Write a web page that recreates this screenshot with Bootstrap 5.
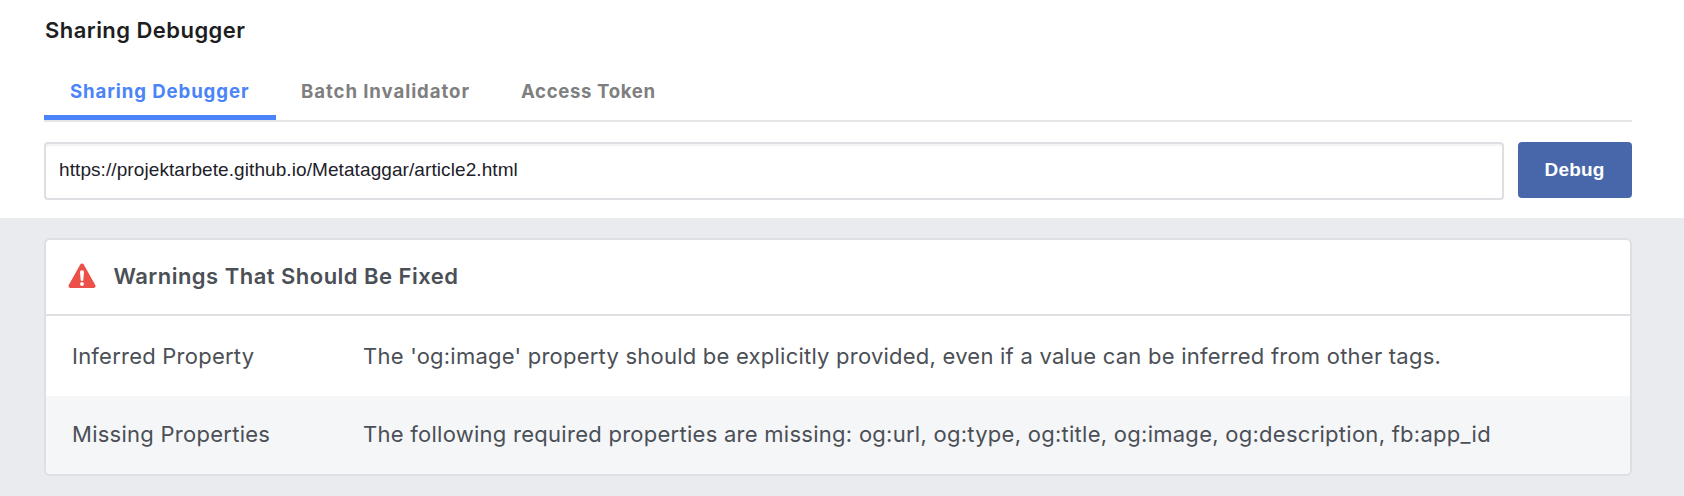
<!DOCTYPE html>
<html lang="en">
<head>
<meta charset="utf-8">
<meta name="viewport" content="width=device-width, initial-scale=1">
<title>Sharing Debugger</title>
<link href="https://cdn.jsdelivr.net/npm/bootstrap@5.3.0/dist/css/bootstrap.min.css" rel="stylesheet">
<style>
body{background:#e9ebee;font-family:Inter,sans-serif;min-height:496px;overflow:hidden}
.top{height:218px;padding:0 52px 0 44px}
h1{font-size:22px;font-weight:600;line-height:30px;padding:15px 0 0 1px;margin:0;color:#1c1e21;letter-spacing:.45px}
.tabs{height:62px;margin-top:15px;border-bottom:2px solid #e5e5e5;padding-top:1px}
.tabs .nav-link{height:59px;border-radius:0;padding:13px 0 0 26px;font-size:18.6px;line-height:34px;font-weight:700;color:#7f7f7f;white-space:nowrap}
.tabs .nav-link.active{color:#4a84f8;border-bottom:5px solid #4a84f8}
.tab-sharing{width:232px;letter-spacing:.9px}
.tabs .tab-batch{width:219px;padding-left:25px;letter-spacing:.93px}
.tab-token{width:190px;letter-spacing:.64px}
.query{margin-top:20px;gap:14px}
.query .form-control{height:58px;border:2px solid #dddfe2;border-radius:4px;padding:0 13px 2px;font:19px "Liberation Sans",sans-serif;letter-spacing:.085px;color:#1d2129;box-shadow:inset 0 2px #f4f4f5}
.query .btn{width:114px;height:56px;background:#4867aa;border:0;border-radius:4px;color:#fff;font:bold 19px "Liberation Sans",sans-serif;letter-spacing:.15px;padding:0 1px 0 0}
.panel{margin:20px 52px 0 44px;border:2px solid #dddfe2;border-radius:6px;background:#fff;overflow:hidden;color:#4b4f56;font-size:22px;letter-spacing:.23px}
.panel-head{height:76px;border-bottom:2px solid #dfe0e3;padding:0 0 2px 22px;font-weight:600;letter-spacing:.48px;gap:17.5px}
.panel-head svg{margin-top:-1px}
.entry{height:80px;padding-left:26px}
.entry-alt{height:78px;background:#f5f6f8;padding-bottom:1px;letter-spacing:.265px}
.entry dt{width:291px;font-weight:400}
.entry dd{margin:0;white-space:nowrap}
</style>
</head>
<body>
<header class="top bg-white">
<h1>Sharing Debugger</h1>
<nav class="nav tabs">
<a class="nav-link tab-sharing active" href="#">Sharing Debugger</a>
<a class="nav-link tab-batch" href="#">Batch Invalidator</a>
<a class="nav-link tab-token" href="#">Access Token</a>
</nav>
<form class="query d-flex">
<input class="form-control" aria-label="URL" value="https://projektarbete.github.io/Metataggar/article2.html">
<button class="btn flex-shrink-0" type="button">Debug</button>
</form>
</header>
<main class="panel">
<div class="panel-head d-flex align-items-center">
<svg width="28" height="26" viewBox="0 0 28 26"><path d="M14 2.5 25.5 23H2.5Z" fill="#eb5148" stroke="#eb5148" stroke-width="4" stroke-linejoin="round"/><path d="M12 8.8Q12 7.3 14 7.3T16 8.8L15.3 17.2Q15 18 14 18T12.7 17.2Z" fill="#fff"/><circle cx="14" cy="21" r="1.9" fill="#fff"/></svg>
<span>Warnings That Should Be Fixed</span>
</div>
<dl class="m-0">
<div class="entry d-flex align-items-center"><dt>Inferred Property</dt><dd>The 'og:image' property should be explicitly provided, even if a value can be inferred from other tags.</dd></div>
<div class="entry entry-alt d-flex align-items-center"><dt>Missing Properties</dt><dd>The following required properties are missing: og:url, og:type, og:title, og:image, og:description, fb:app_id</dd></div>
</dl>
</main>
<script src="https://cdn.jsdelivr.net/npm/bootstrap@5.3.0/dist/js/bootstrap.bundle.min.js"></script>
</body>
</html>
